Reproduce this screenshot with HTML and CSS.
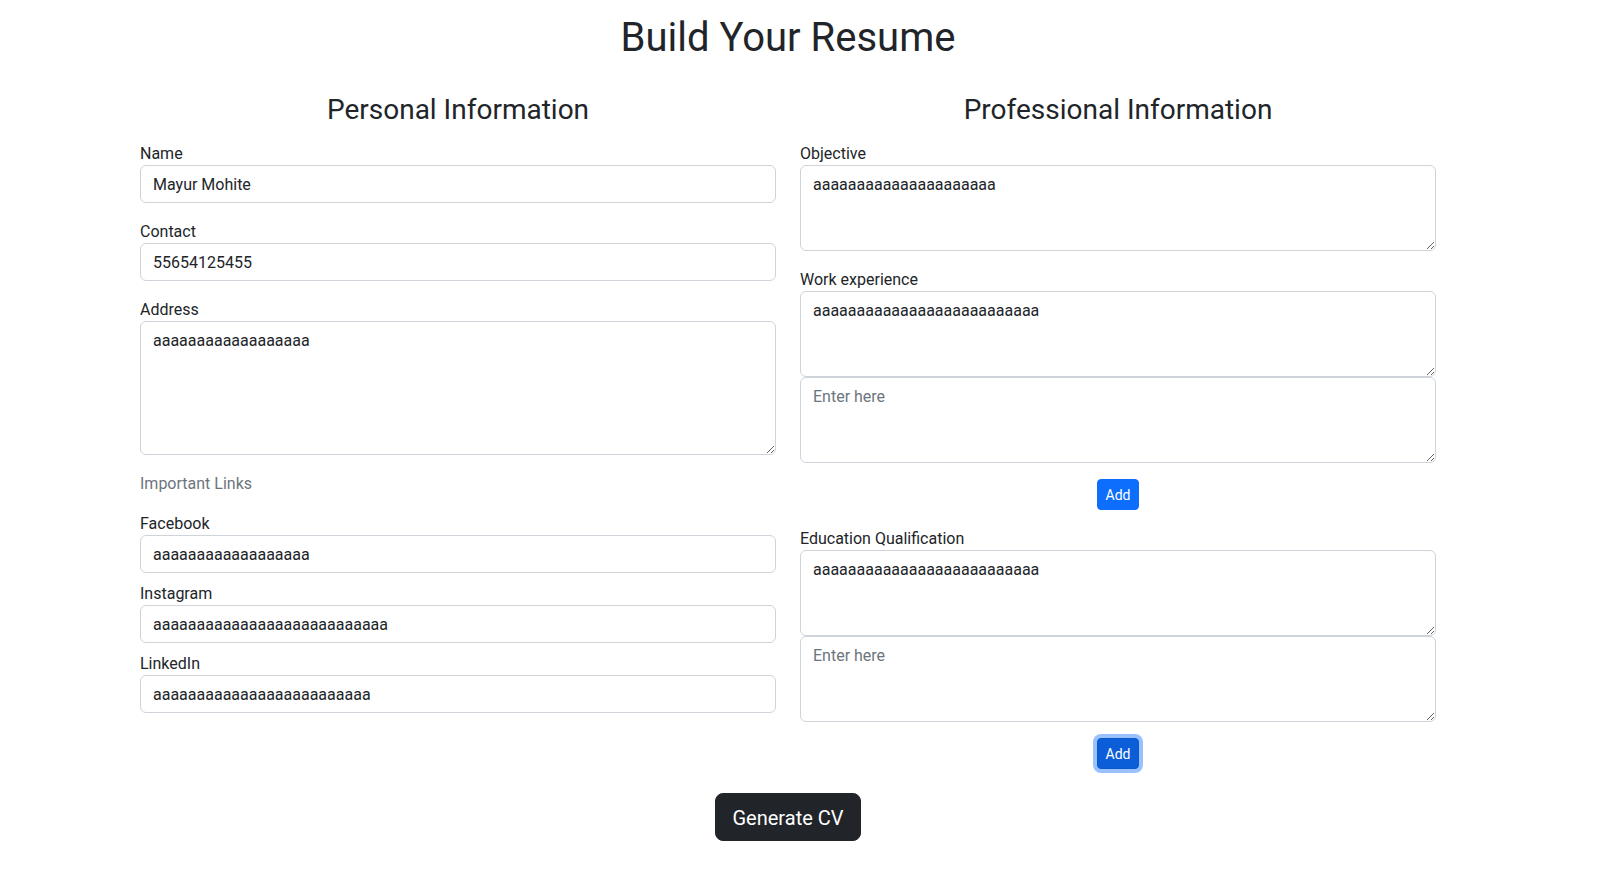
FILE: index.html
```html
<!DOCTYPE html>
<html lang="en">
<head>
<meta charset="utf-8">
<title>Build Your Resume</title>
<link rel="stylesheet" href="styles.css">
</head>
<body>
<div class="container">
  <h1 class="page-title">Build Your Resume</h1>
  <div class="form-row">
    <div class="col">
      <h3 class="section-title">Personal Information</h3>
      <div class="field">
        <label class="form-label">Name</label>
        <input class="form-control" type="text" value="Mayur Mohite">
      </div>
      <div class="field">
        <label class="form-label">Contact</label>
        <input class="form-control" type="text" value="55654125455">
      </div>
      <div class="field">
        <label class="form-label">Address</label>
        <textarea class="form-control area-lg">aaaaaaaaaaaaaaaaaa</textarea>
      </div>
      <p class="muted">Important Links</p>
      <div class="field field-sm">
        <label class="form-label">Facebook</label>
        <input class="form-control" type="text" value="aaaaaaaaaaaaaaaaaa">
      </div>
      <div class="field field-sm">
        <label class="form-label">Instagram</label>
        <input class="form-control" type="text" value="aaaaaaaaaaaaaaaaaaaaaaaaaaa">
      </div>
      <div class="field field-sm">
        <label class="form-label">LinkedIn</label>
        <input class="form-control" type="text" value="aaaaaaaaaaaaaaaaaaaaaaaaa">
      </div>
    </div>
    <div class="col">
      <h3 class="section-title">Professional Information</h3>
      <div class="field">
        <label class="form-label">Objective</label>
        <textarea class="form-control area">aaaaaaaaaaaaaaaaaaaaa</textarea>
      </div>
      <div class="field">
        <label class="form-label">Work experience</label>
        <textarea class="form-control area">aaaaaaaaaaaaaaaaaaaaaaaaaa</textarea>
        <textarea class="form-control area" placeholder="Enter here"></textarea>
        <div class="add-wrap">
          <button class="btn btn-primary btn-sm" type="button">Add</button>
        </div>
      </div>
      <div class="field">
        <label class="form-label">Education Qualification</label>
        <textarea class="form-control area">aaaaaaaaaaaaaaaaaaaaaaaaaa</textarea>
        <textarea class="form-control area" placeholder="Enter here"></textarea>
        <div class="add-wrap">
          <button class="btn btn-primary btn-sm is-focused" type="button">Add</button>
        </div>
      </div>
    </div>
  </div>
  <div class="submit-wrap">
    <button class="btn btn-dark btn-lg" type="button">Generate CV</button>
  </div>
</div>
</body>
</html>
```
FILE: styles.css
```css
* {
  box-sizing: border-box;
}

html, body {
  margin: 0;
  padding: 0;
  background: #fff;
}

body {
  font-family: Roboto, "Noto Sans", sans-serif;
  font-size: 16px;
  line-height: 1.5;
  color: #212529;
}

.container {
  width: 1296px;
  margin-left: 140px;
}

.page-title {
  margin: 14px 0 31px;
  font-size: 40px;
  font-weight: 400;
  line-height: 48px;
  text-align: center;
}

.form-row {
  display: grid;
  grid-template-columns: 636px 636px;
  column-gap: 24px;
}

.section-title {
  margin: 0 0 14px;
  font-size: 28px;
  font-weight: 400;
  line-height: 33.6px;
  text-align: center;
}

.field {
  margin-bottom: 16px;
}

.field-sm {
  margin-bottom: 8px;
}

.form-label {
  display: block;
  height: 24px;
  padding-top: 2px;
  line-height: 22px;
}

.form-control {
  display: block;
  width: 100%;
  height: 38px;
  margin: 0;
  padding: 7px 12px 5px;
  font-family: inherit;
  font-size: 16px;
  line-height: 24px;
  color: #212529;
  background: #fff;
  border: 1px solid #ced4da;
  border-radius: 6px;
  outline: none;
}

.form-control::placeholder {
  color: #6c757d;
  opacity: 1;
}

textarea.form-control {
  resize: vertical;
}

.area {
  height: 86px;
}

.area-lg {
  height: 134px;
}

.muted {
  height: 24px;
  margin: 0 0 16px;
  padding-top: 2px;
  line-height: 22px;
  color: #6c757d;
}

.add-wrap {
  display: flex;
  justify-content: center;
  margin-top: 16px;
}

.submit-wrap {
  display: flex;
  justify-content: center;
  margin-top: 8px;
}

.btn {
  display: inline-block;
  font-family: inherit;
  font-weight: 400;
  text-align: center;
  border: 1px solid transparent;
  cursor: pointer;
}

.btn-sm {
  padding: 5px 8px 3px;
  font-size: 14px;
  line-height: 21px;
  border-radius: 4px;
}

.btn-lg {
  padding: 9px 16px 7px;
  font-size: 20px;
  line-height: 30px;
  border-radius: 8px;
}

.btn-primary {
  color: #fff;
  background: #0d6efd;
  border-color: #0d6efd;
}

.btn-primary.is-focused {
  background: #0b5ed7;
  border-color: #0a58ca;
  box-shadow: 0 0 0 4px rgba(49, 132, 253, 0.5);
}

.btn-dark {
  color: #fff;
  background: #212529;
  border-color: #212529;
}
```
